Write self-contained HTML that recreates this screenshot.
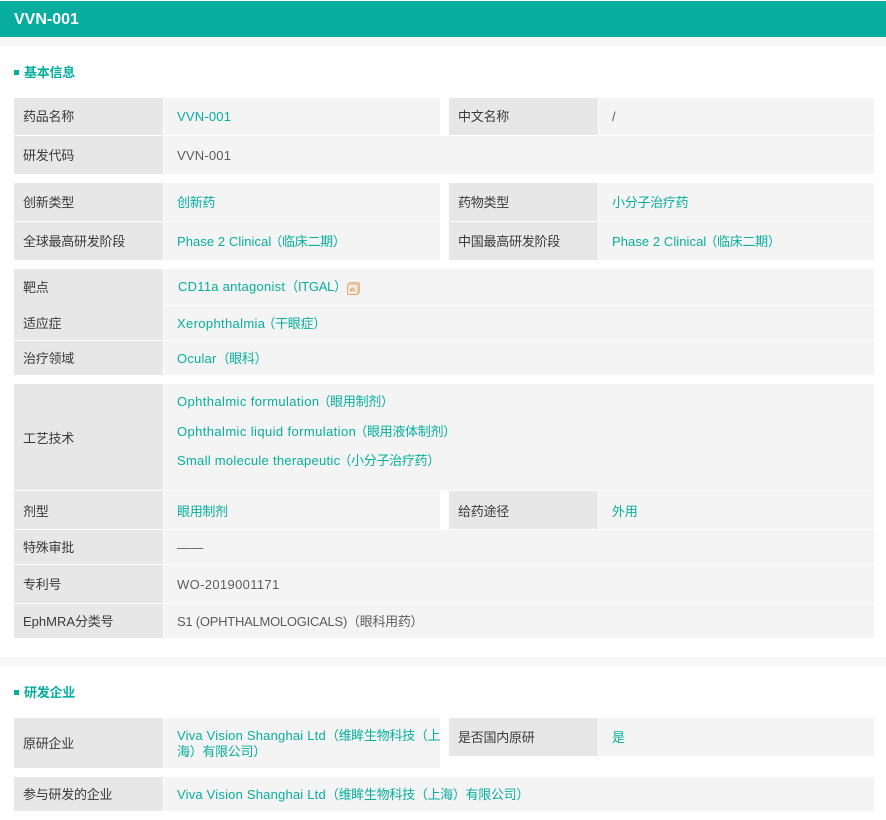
<!DOCTYPE html>
<html lang="zh">
<head>
<meta charset="utf-8">
<title>VVN-001</title>
<style>
html,body{margin:0;padding:0;background:#fff}
#p{position:relative;width:886px;height:820px;overflow:hidden;background:#fff;font-family:"Liberation Sans","Noto Sans CJK SC",sans-serif;font-size:13px;color:#333}
#p div{position:absolute}
.l{background:#e7e7e7;left:14px;width:149px}
.l2{background:#e7e7e7;left:449px;width:149px}
.v{background:#f4f4f4;left:164px;width:276px}
.v2{background:#f4f4f4;left:599px;width:275px}
.w{background:#f4f4f4;left:164px;width:710px}
.t{height:20px;line-height:20px;white-space:nowrap;color:#3a3a3a;letter-spacing:-.25px}
.g{color:#5c5c5c;letter-spacing:.2px}
.a{color:#07ae9f;letter-spacing:.2px}
.c{letter-spacing:-.3px}
.h{color:#07ae9f;font-weight:bold;font-size:13px;left:24px;height:20px;line-height:20px;white-space:nowrap;letter-spacing:-.25px}
.s{background:#07ae9f;left:14px;width:5px;height:5px}
.x1{left:23px}.x2{left:177px}.x3{left:458px}.x4{left:612px}
</style>
</head>
<body>
<div id="p">
<div style="left:0;top:1px;width:886px;height:36px;background:#07ae9f"></div>
<div style="left:14px;top:10px;height:20px;line-height:20px;color:#fff;font-weight:bold;font-size:16px">VVN-001</div>
<div style="left:0;top:37px;width:886px;height:9px;background:#f7f7f7"></div>
<div class="s" style="top:70px"></div>
<div class="h" style="top:63px">基本信息</div>

<div class="l" style="top:98px;height:37px"></div><div class="v" style="top:98px;height:37px"></div>
<div class="l2" style="top:98px;height:37px"></div><div class="v2" style="top:98px;height:37px"></div>
<div class="l" style="top:136px;height:38px"></div><div class="w" style="top:136px;height:38px"></div>

<div class="l" style="top:183px;height:38px"></div><div class="v" style="top:183px;height:38px"></div>
<div class="l2" style="top:183px;height:38px"></div><div class="v2" style="top:183px;height:38px"></div>
<div class="l" style="top:222px;height:38px"></div><div class="v" style="top:222px;height:38px"></div>
<div class="l2" style="top:222px;height:38px"></div><div class="v2" style="top:222px;height:38px"></div>

<div class="l" style="top:269px;height:71px"></div><div class="w" style="top:269px;height:36px"></div>
<div class="w" style="top:306px;height:34px"></div>
<div class="l" style="top:341px;height:34px"></div><div class="w" style="top:341px;height:34px"></div>

<div class="l" style="top:384px;height:106px"></div><div class="w" style="top:384px;height:106px"></div>
<div class="l" style="top:491px;height:38px"></div><div class="v" style="top:491px;height:38px"></div>
<div class="l2" style="top:491px;height:38px"></div><div class="v2" style="top:491px;height:38px"></div>
<div class="l" style="top:530px;height:34px"></div><div class="w" style="top:530px;height:34px"></div>
<div class="l" style="top:565px;height:38px"></div><div class="w" style="top:565px;height:38px"></div>
<div class="l" style="top:604px;height:34px"></div><div class="w" style="top:604px;height:34px"></div>

<div style="left:0;top:657px;width:886px;height:9px;background:#f7f7f7"></div>
<div class="s" style="top:690px"></div>
<div class="h" style="top:683px">研发企业</div>
<div class="l" style="top:718px;height:50px"></div><div class="v" style="top:718px;height:50px"></div>
<div class="l2" style="top:718px;height:38px"></div><div class="v2" style="top:718px;height:38px"></div>
<div class="l" style="top:777px;height:34px"></div><div class="w" style="top:777px;height:34px"></div>

<div class="t x1" style="top:107px">药品名称</div><div class="t a x2" style="top:107px">VVN-001</div>
<div class="t x3" style="top:107px">中文名称</div><div class="t g x4" style="top:107px">/</div>
<div class="t x1" style="top:146px">研发代码</div><div class="t g x2" style="top:146px">VVN-001</div>

<div class="t x1" style="top:193px">创新类型</div><div class="t a x2 c" style="top:193px">创新药</div>
<div class="t x3" style="top:193px">药物类型</div><div class="t a x4 c" style="top:193px">小分子治疗药</div>
<div class="t x1" style="top:232px">全球最高研发阶段</div><div class="t a x2" style="top:232px;letter-spacing:.07px">Phase 2 Clinical<span class="c" style="margin-left:-2px">（临床二期）</span></div>
<div class="t x3" style="top:232px">中国最高研发阶段</div><div class="t a x4" style="top:232px;letter-spacing:.07px">Phase 2 Clinical<span class="c" style="margin-left:-2px">（临床二期）</span></div>

<div class="t x1" style="top:278px">靶点</div><div class="t a" style="top:277px;left:178px;letter-spacing:.26px">CD11a antagonist<span class="c">（ITGAL）</span></div>
<svg style="position:absolute;left:346px;top:281px" width="15" height="15" viewBox="0 0 15 15"><rect x="3" y="1.5" width="10.5" height="11" rx="1.5" fill="#f0dcc8" stroke="#e3b98f"/><rect x="1.5" y="3" width="10.5" height="10.5" rx="1.5" fill="#f7ece0" stroke="#e0a878"/><path d="M4.5 10.5l4-4M4 9l1.5-1.5M7.5 10.5L9 9" stroke="#dd9a63" stroke-width="1.2" fill="none"/></svg>
<div class="t x1" style="top:314px">适应症</div><div class="t a x2" style="top:314px;letter-spacing:.35px">Xerophthalmia<span class="c" style="margin-left:-3px">（干眼症）</span></div>
<div class="t x1" style="top:349px">治疗领域</div><div class="t a x2" style="top:349px">Ocular<span class="c">（眼科）</span></div>

<div class="t x1" style="top:429px">工艺技术</div>
<div class="t a x2" style="top:392px;letter-spacing:.4px">Ophthalmic formulation<span class="c" style="margin-left:-2px">（眼用制剂）</span></div>
<div class="t a x2" style="top:422px;letter-spacing:.4px">Ophthalmic liquid formulation<span class="c" style="margin-left:-2px">（眼用液体制剂）</span></div>
<div class="t a x2" style="top:451px;letter-spacing:.28px">Small molecule therapeutic<span class="c" style="margin-left:-2px">（小分子治疗药）</span></div>

<div class="t x1" style="top:502px">剂型</div><div class="t a x2 c" style="top:502px">眼用制剂</div>
<div class="t x3" style="top:502px">给药途径</div><div class="t a x4 c" style="top:502px">外用</div>
<div class="t x1" style="top:538px">特殊审批</div><div class="t g x2" style="top:538px">——</div>
<div class="t x1" style="top:575px">专利号</div><div class="t g x2" style="top:575px;letter-spacing:.35px">WO-2019001171</div>
<div class="t x1" style="top:612px"><span style="letter-spacing:0">EphMRA</span>分类号</div><div class="t g x2" style="top:612px;letter-spacing:-.25px">S1 (OPHTHALMOLOGICALS)<span class="c">（眼科用药）</span></div>

<div class="t x1" style="top:734px">原研企业</div>
<div class="t a x2" style="top:726px">Viva Vision Shanghai Ltd<span class="c">（维眸生物科技（上</span></div>
<div class="t a x2 c" style="top:742px">海）有限公司）</div>
<div class="t x3" style="top:728px">是否国内原研</div><div class="t a x4 c" style="top:728px">是</div>
<div class="t x1" style="top:785px">参与研发的企业</div><div class="t a x2" style="top:785px">Viva Vision Shanghai Ltd<span class="c">（维眸生物科技（上海）有限公司）</span></div>
</div>
</body>
</html>
